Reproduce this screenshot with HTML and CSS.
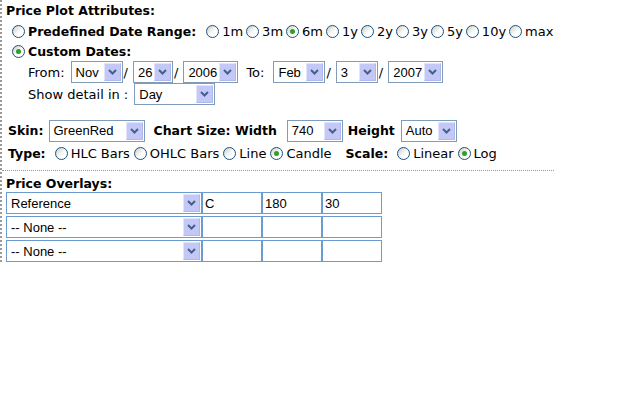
FILE: index.html
```html
<!DOCTYPE html>
<html lang="en">
<head>
  <meta charset="UTF-8">
  <title>Price Plot Attributes</title>
  <link rel="stylesheet" href="styles.css">
</head>
<body>

<div class="panel">
  <div class="section">
    <div class="title">Price Plot Attributes:</div>

    <div class="row indent">
      <label class="opt"><span class="radio"></span><b>Predefined Date Range:</b></label>
      <span class="opts first">
        <label class="opt"><span class="radio"></span>1m</label>
        <label class="opt"><span class="radio"></span>3m</label>
        <label class="opt"><span class="radio on"></span>6m</label>
        <label class="opt"><span class="radio"></span>1y</label>
        <label class="opt"><span class="radio"></span>2y</label>
        <label class="opt"><span class="radio"></span>3y</label>
        <label class="opt"><span class="radio"></span>5y</label>
        <label class="opt"><span class="radio"></span>10y</label>
        <label class="opt"><span class="radio"></span>max</label>
      </span>
    </div>

    <div class="row indent short">
      <label class="opt"><span class="radio on"></span><b>Custom Dates:</b></label>
    </div>

    <div class="row sub">
      <span class="lbl">From:</span>
      <span class="sel w-mon"><span class="val">Nov</span><span class="arrow"><svg width="9" height="6" viewBox="0 0 9 6"><path d="M1 1l3.5 3.5L8 1" fill="none" stroke="#45608c" stroke-width="2"/></svg></span></span>
      <span class="slash">/</span>
      <span class="sel w-day"><span class="val">26</span><span class="arrow"><svg width="9" height="6" viewBox="0 0 9 6"><path d="M1 1l3.5 3.5L8 1" fill="none" stroke="#45608c" stroke-width="2"/></svg></span></span>
      <span class="slash">/</span>
      <span class="sel w-year"><span class="val">2006</span><span class="arrow"><svg width="9" height="6" viewBox="0 0 9 6"><path d="M1 1l3.5 3.5L8 1" fill="none" stroke="#45608c" stroke-width="2"/></svg></span></span>
      <span class="lbl to">To:</span>
      <span class="sel w-mon"><span class="val">Feb</span><span class="arrow"><svg width="9" height="6" viewBox="0 0 9 6"><path d="M1 1l3.5 3.5L8 1" fill="none" stroke="#45608c" stroke-width="2"/></svg></span></span>
      <span class="slash">/</span>
      <span class="sel w-day1"><span class="val">3</span><span class="arrow"><svg width="9" height="6" viewBox="0 0 9 6"><path d="M1 1l3.5 3.5L8 1" fill="none" stroke="#45608c" stroke-width="2"/></svg></span></span>
      <span class="slash">/</span>
      <span class="sel w-year"><span class="val">2007</span><span class="arrow"><svg width="9" height="6" viewBox="0 0 9 6"><path d="M1 1l3.5 3.5L8 1" fill="none" stroke="#45608c" stroke-width="2"/></svg></span></span>
    </div>

    <div class="row sub">
      <span class="lbl">Show detail in :</span>
      <span class="sel w-detail"><span class="val">Day</span><span class="arrow"><svg width="9" height="6" viewBox="0 0 9 6"><path d="M1 1l3.5 3.5L8 1" fill="none" stroke="#45608c" stroke-width="2"/></svg></span></span>
    </div>

    <div class="row plain spaced">
      <b>Skin:</b>
      <span class="sel w-skin"><span class="val">GreenRed</span><span class="arrow"><svg width="9" height="6" viewBox="0 0 9 6"><path d="M1 1l3.5 3.5L8 1" fill="none" stroke="#45608c" stroke-width="2"/></svg></span></span>
      <b class="gap">Chart Size: Width</b>
      <span class="sel w-size"><span class="val">740</span><span class="arrow"><svg width="9" height="6" viewBox="0 0 9 6"><path d="M1 1l3.5 3.5L8 1" fill="none" stroke="#45608c" stroke-width="2"/></svg></span></span>
      <b>Height</b>
      <span class="sel w-auto"><span class="val">Auto</span><span class="arrow"><svg width="9" height="6" viewBox="0 0 9 6"><path d="M1 1l3.5 3.5L8 1" fill="none" stroke="#45608c" stroke-width="2"/></svg></span></span>
    </div>

    <div class="row plain">
      <b>Type:</b>
      <span class="opts">
        <label class="opt"><span class="radio"></span>HLC Bars</label>
        <label class="opt"><span class="radio"></span>OHLC Bars</label>
        <label class="opt"><span class="radio"></span>Line</label>
        <label class="opt"><span class="radio on"></span>Candle</label>
      </span>
      <b class="gap wide">Scale:</b>
      <span class="opts">
        <label class="opt"><span class="radio"></span>Linear</label>
        <label class="opt"><span class="radio on"></span>Log</label>
      </span>
    </div>
  </div>

  <div class="section overlays">
    <div class="title">Price Overlays:</div>
    <div class="grid">
      <span class="sel cell"><span class="val">Reference</span><span class="arrow"><svg width="9" height="6" viewBox="0 0 9 6"><path d="M1 1l3.5 3.5L8 1" fill="none" stroke="#45608c" stroke-width="2"/></svg></span></span>
      <span class="inp">C</span>
      <span class="inp">180</span>
      <span class="inp">30</span>

      <span class="sel cell"><span class="val">-- None --</span><span class="arrow"><svg width="9" height="6" viewBox="0 0 9 6"><path d="M1 1l3.5 3.5L8 1" fill="none" stroke="#45608c" stroke-width="2"/></svg></span></span>
      <span class="inp"></span>
      <span class="inp"></span>
      <span class="inp"></span>

      <span class="sel cell"><span class="val">-- None --</span><span class="arrow"><svg width="9" height="6" viewBox="0 0 9 6"><path d="M1 1l3.5 3.5L8 1" fill="none" stroke="#45608c" stroke-width="2"/></svg></span></span>
      <span class="inp"></span>
      <span class="inp"></span>
      <span class="inp"></span>
    </div>
  </div>
</div>

</body>
</html>
```

FILE: styles.css
```css
* {
  box-sizing: border-box;
}

body {
  margin: 0;
  font-family: "DejaVu Sans", Verdana, sans-serif;
  font-size: 13px;
  color: #000;
  background-color: #fff;
}

.panel {
  width: 554px;
  border-left: 2px dotted #999;
}

.section {
  padding: 0 0 5px 4px;
}

.title {
  font-weight: bold;
  font-size: 12.5px;
  height: 21px;
  line-height: 21px;
}

.row {
  display: flex;
  align-items: center;
  height: 21px;
  white-space: nowrap;
}

.row b {
  font-weight: bold;
  font-size: 12.5px;
}

.indent {
  padding-left: 6px;
}

.short {
  height: 19px;
}

.sub {
  padding-left: 22px;
  height: 22px;
}

.plain {
  height: 23px;
  padding-left: 2px;
}

.spaced {
  margin-top: 14px;
}

.gap {
  margin-left: 9px;
}

.gap.wide {
  margin-left: 14px;
}

.opts {
  display: flex;
  align-items: center;
  gap: 4px;
  margin-left: 9px;
}

.opts.first {
  gap: 3px;
  margin-left: 10px;
}

.opt {
  display: flex;
  align-items: center;
}

.radio {
  flex-shrink: 0;
  display: inline-block;
  width: 13px;
  height: 13px;
  margin-right: 3px;
  border: 1px solid #1c5180;
  border-radius: 50%;
  background: linear-gradient(135deg, #d6d6cc 10%, #fff 60%);
  position: relative;
}

.radio.on::after {
  content: "";
  position: absolute;
  left: 3px;
  top: 3px;
  width: 5px;
  height: 5px;
  border-radius: 50%;
  background: #2aa12a;
}

.lbl {
  margin-right: 6px;
}

.lbl.to {
  margin-left: 8px;
  margin-right: 9px;
}

.slash {
  margin: 0 5px 0 1px;
}

.sel {
  flex-shrink: 0;
  display: inline-flex;
  align-items: center;
  height: 22px;
  border: 1px solid #7f9db9;
  background: #fff;
  font-family: "Liberation Sans", Arial, sans-serif;
  font-size: 13px;
  padding-left: 4px;
}

.sel .val {
  flex: 1;
}

.sel .arrow {
  display: flex;
  align-items: center;
  justify-content: center;
  width: 17px;
  height: 18px;
  margin-right: 1px;
  background: #c3c8f7;
  border-top: 1px solid #e2e4fc;
  border-left: 1px solid #e2e4fc;
  border-bottom: 1px solid #b2b8ef;
  border-right: 1px solid #b2b8ef;
}

.w-mon { width: 52px; }
.w-day { width: 40px; }
.w-day1 { width: 42px; }
.w-year { width: 55px; }
.w-detail { width: 81px; }
.w-skin { width: 96px; margin-left: 5px; }
.w-size { width: 56px; margin: 0 5px 0 10px; }
.w-auto { width: 56px; margin-left: 6px; }

.overlays {
  border-top: 1px dotted #999;
  padding: 4px 0 0 4px;
}

.overlays .title {
  height: 17px;
  line-height: 17px;
}

.grid {
  display: grid;
  grid-template-columns: 196px 60px 60px 60px;
  grid-auto-rows: 22px;
  row-gap: 2px;
  width: 376px;
}

.sel.cell,
.inp {
  height: 22px;
  border: 1px solid #6c9bd0;
  font-family: "Liberation Sans", Arial, sans-serif;
  font-size: 13px;
}

.inp {
  display: flex;
  align-items: center;
  padding-left: 2px;
  background: #fff;
}
```
